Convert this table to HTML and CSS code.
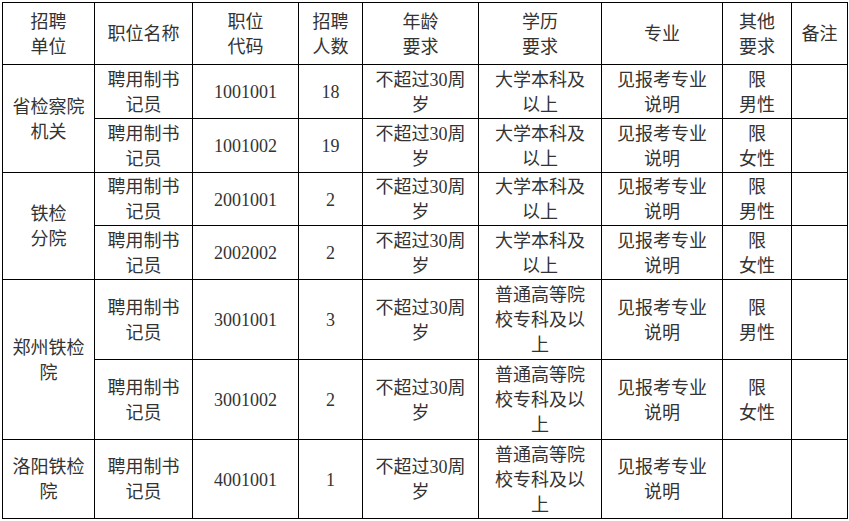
FILE: index.html
```html
<!DOCTYPE html>
<html lang="zh">
<head>
<meta charset="utf-8">
<title>招聘职位表</title>
<link rel="stylesheet" href="styles.css">
</head>
<body>
<table class="jobs">
  <tr class="r-head">
    <th class="c1">招聘<br>单位</th>
    <th class="c2">职位名称</th>
    <th class="c3">职位<br>代码</th>
    <th class="c4">招聘<br>人数</th>
    <th class="c5">年龄<br>要求</th>
    <th class="c6">学历<br>要求</th>
    <th class="c7">专业</th>
    <th class="c8">其他<br>要求</th>
    <th class="c9">备注</th>
  </tr>
  <tr class="r54">
    <td rowspan="2">省检察院<br>机关</td>
    <td>聘用制书<br>记员</td>
    <td>1001001</td>
    <td>18</td>
    <td>不超过30周<br>岁</td>
    <td>大学本科及<br>以上</td>
    <td>见报考专业<br>说明</td>
    <td>限<br>男性</td>
    <td></td>
  </tr>
  <tr class="r54">
    <td>聘用制书<br>记员</td>
    <td>1001002</td>
    <td>19</td>
    <td>不超过30周<br>岁</td>
    <td>大学本科及<br>以上</td>
    <td>见报考专业<br>说明</td>
    <td>限<br>女性</td>
    <td></td>
  </tr>
  <tr class="r53">
    <td rowspan="2">铁检<br>分院</td>
    <td>聘用制书<br>记员</td>
    <td>2001001</td>
    <td>2</td>
    <td>不超过30周<br>岁</td>
    <td>大学本科及<br>以上</td>
    <td>见报考专业<br>说明</td>
    <td>限<br>男性</td>
    <td></td>
  </tr>
  <tr class="r54">
    <td>聘用制书<br>记员</td>
    <td>2002002</td>
    <td>2</td>
    <td>不超过30周<br>岁</td>
    <td>大学本科及<br>以上</td>
    <td>见报考专业<br>说明</td>
    <td>限<br>女性</td>
    <td></td>
  </tr>
  <tr class="r80">
    <td rowspan="2">郑州铁检<br>院</td>
    <td>聘用制书<br>记员</td>
    <td>3001001</td>
    <td>3</td>
    <td>不超过30周<br>岁</td>
    <td>普通高等院<br>校专科及以<br>上</td>
    <td>见报考专业<br>说明</td>
    <td>限<br>男性</td>
    <td></td>
  </tr>
  <tr class="r80">
    <td>聘用制书<br>记员</td>
    <td>3001002</td>
    <td>2</td>
    <td>不超过30周<br>岁</td>
    <td>普通高等院<br>校专科及以<br>上</td>
    <td>见报考专业<br>说明</td>
    <td>限<br>女性</td>
    <td></td>
  </tr>
  <tr class="r79">
    <td>洛阳铁检<br>院</td>
    <td>聘用制书<br>记员</td>
    <td>4001001</td>
    <td>1</td>
    <td>不超过30周<br>岁</td>
    <td>普通高等院<br>校专科及以<br>上</td>
    <td>见报考专业<br>说明</td>
    <td></td>
    <td></td>
  </tr>
</table>
</body>
</html>
```

FILE: styles.css
```css
html, body {
  margin: 0;
  padding: 0;
  background: #ffffff;
}

body {
  padding: 2px 0 0 2px;
}

.jobs {
  border-collapse: separate;
  border-spacing: 0;
  table-layout: fixed;
  width: 846px;
  border-top: 1px solid #000;
  border-left: 1px solid #000;
  font-family: "Liberation Serif", "Noto Sans CJK SC", serif;
  font-size: 18px;
  line-height: 25px;
  color: #333333;
}

.jobs th,
.jobs td {
  box-sizing: border-box;
  border-right: 1px solid #000;
  border-bottom: 1px solid #000;
  padding: 2px 0 0 0;
  text-align: center;
  vertical-align: middle;
  white-space: nowrap;
  font-weight: normal;
}

.c1 { width: 92px; }
.c2 { width: 98px; }
.c3 { width: 106px; }
.c4 { width: 64px; }
.c5 { width: 116px; }
.c6 { width: 123px; }
.c7 { width: 121px; }
.c8 { width: 69px; }
.c9 { width: 56px; }

.r-head { height: 62px; }
.r54 { height: 54px; }
.r53 { height: 53px; }
.r80 { height: 80px; }
.r79 { height: 79px; }
```
